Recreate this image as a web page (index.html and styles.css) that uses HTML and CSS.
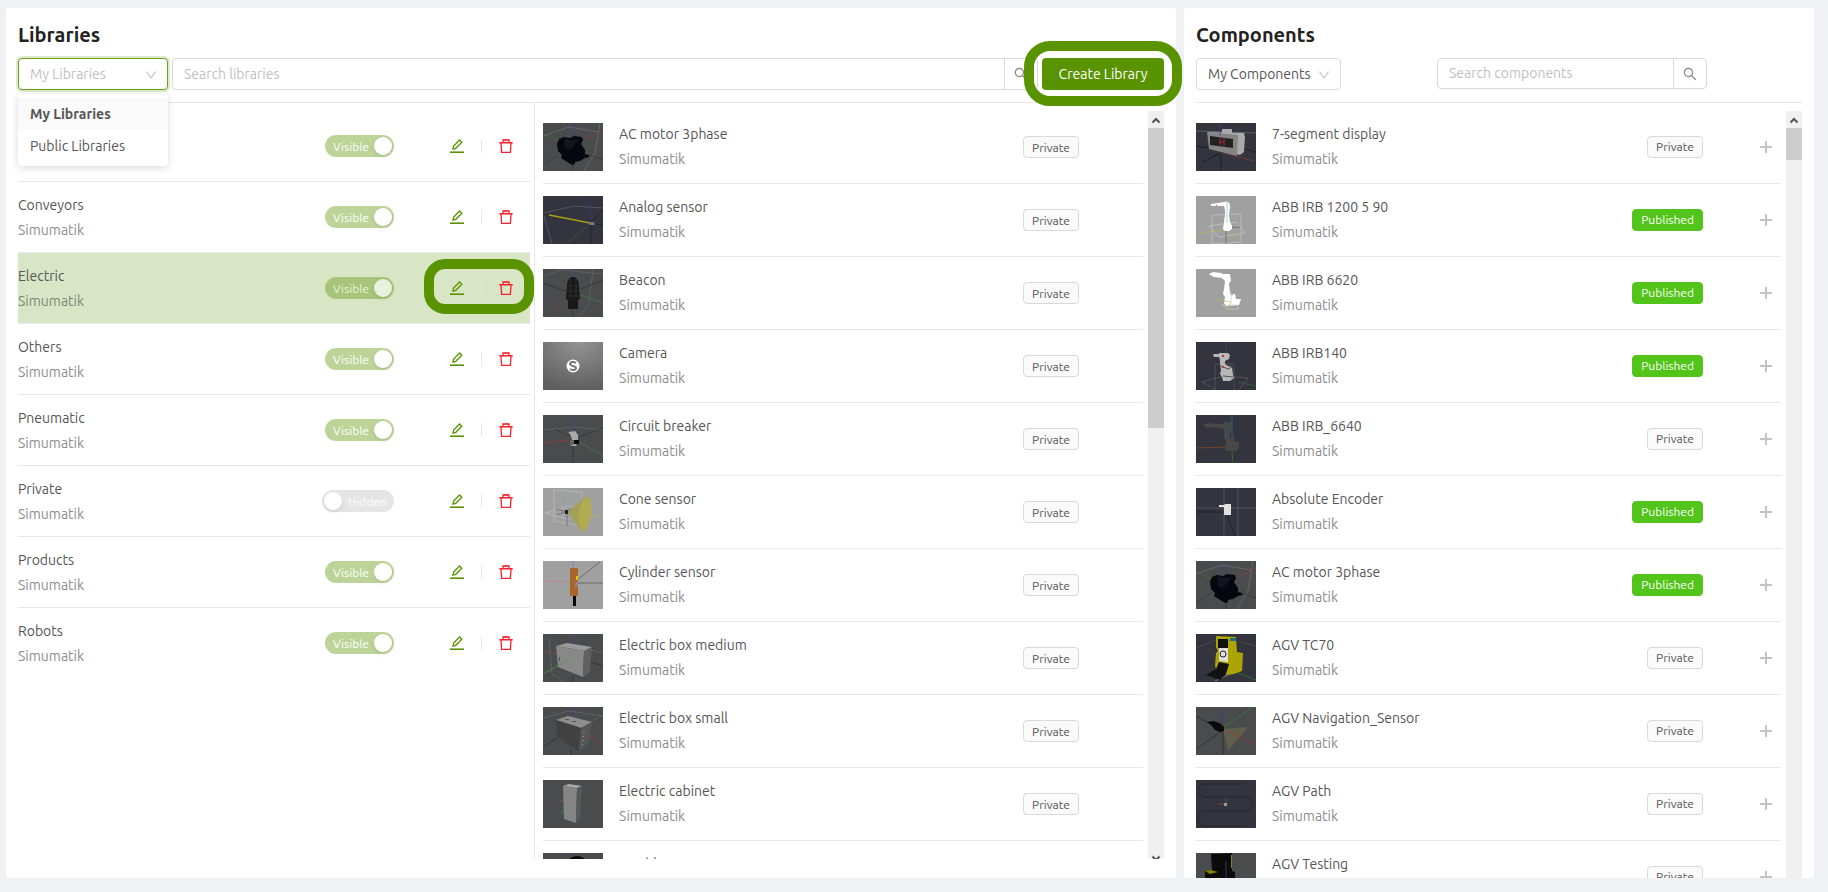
FILE: index.html
```html
<!DOCTYPE html>
<html lang="en">
  <head>
    <meta charset="UTF-8" />
    <meta name="viewport" content="width=device-width, initial-scale=1.0" />
    <title>Libraries</title>
    <link rel="stylesheet" href="styles.css">
  </head>
  <body>
    <svg class="sprite" aria-hidden="true">
      <symbol id="i-search" viewBox="64 64 896 896"><path d="M909.6 854.5L649.9 594.8C690.2 542.7 712 479 712 412c0-80.2-31.3-155.4-87.9-212.1-56.6-56.7-132-87.9-212.1-87.9s-155.5 31.3-212.1 87.9C143.2 256.5 112 331.8 112 412c0 80.1 31.3 155.5 87.9 212.1C256.5 680.8 331.8 712 412 712c67 0 130.6-21.8 182.7-62l259.7 259.6a8.2 8.2 0 0011.6 0l43.6-43.5a8.2 8.2 0 000-11.6zM570.4 570.4C528 612.7 471.8 636 412 636s-116-23.3-158.4-65.6C211.3 528 188 471.8 188 412s23.3-116.1 65.6-158.4C296 211.3 352.2 188 412 188s116.1 23.2 158.4 65.6S636 352.2 636 412s-23.3 116.1-65.6 158.4z"/></symbol>
      <symbol id="i-down" viewBox="64 64 896 896"><path d="M884 256h-75c-5.1 0-9.9 2.5-12.9 6.6L512 654.2 227.9 262.6c-3-4.1-7.8-6.6-12.9-6.6h-75c-6.5 0-10.3 7.4-6.5 12.7l352.6 486.1c12.8 17.6 39 17.6 51.7 0l352.6-486.1c3.9-5.3.1-12.7-6.4-12.7z"/></symbol>
      <symbol id="i-edit" viewBox="0 0 14 14">
        <path fill="none" stroke="currentColor" stroke-width="1.3" d="M3 10l.6-2.900L9.600 1l2.200 2.200-6 6.100z"/>
        <path d="M0 12.400h14V14H0z"/>
      </symbol>
      <symbol id="i-trash" viewBox="0 0 14 14">
        <path fill="#f5222d" fill-opacity=".35" d="M4 0h6v2H4zM0 3h14v2H0z"/>
        <path fill="none" stroke="currentColor" stroke-width="1.300" d="M4 3.500V1h6v2.500M.5 3.600h13M2 4l.6 9.400h8.800L12 4"/>
      </symbol>
      <symbol id="i-plus" viewBox="0 0 14 14"><path fill-opacity=".5" d="M6 1h2v12H6zM1 6h12v2H1z"/></symbol>
      <symbol id="i-arrow" viewBox="0 0 16 16"><path d="M4 10l4-4 4 4-1 2-3-3-3 3z"/></symbol>

      <symbol id="t-motor" viewBox="0 0 60 48">
        <path fill="#4a4b4d" d="M0 0h60v48H0z"/>
        <g fill="none" stroke-width=".7">
          <path stroke="#707173" d="M0 13L26 4l29 5M57 0l-5 30-11 18"/>
          <path stroke="#323335" d="M14 33L0 42M30 38v10M46 32l14 5"/>
          <path stroke="#357a30" d="M0 11l16 7"/><path stroke="#9a4436" d="M60 7L42 16"/><path stroke="#4040a0" d="M30 0v14"/>
        </g>
        <path fill="#06070e" d="M14 21l2-5 5-2 6 1 4-2 8 1 1 3-2 4 4 6v4l4 1v2l-4 1-5 3-5 1v2l-3 1-11-7 1-3-4-4z"/>
        <path fill="#12151f" d="M21 15l7 2 8-1-3 4-6 7-5-2z"/>
      </symbol>
      <symbol id="t-analog" viewBox="0 0 60 48">
        <path fill="#33343d" d="M0 0h60v48H0z"/>
        <g fill="none" stroke-width=".7">
          <path stroke="#64656c" d="M0 17l31-7 29 2M1 20l8 28"/>
          <path stroke="#35358c" d="M47 0v26"/><path stroke="#1d1e24" d="M60 14L48 26v22M50 28l10 1"/>
          <path stroke="#2c672c" d="M47 28L23 48"/><path stroke="#a7a016" stroke-width="1.400" d="M6 19l41 8"/>
        </g>
        <path fill="#777" d="M46 26h5l1 3h-5z"/>
      </symbol>
      <symbol id="t-beacon" viewBox="0 0 60 48">
        <path fill="#4a4b4d" d="M0 0h60v48H0z"/>
        <g fill="none" stroke-width=".7">
          <path stroke="#66676a" d="M0 7l18-6 42 4M50 0l-4 34-10 14"/><path stroke="#303133" d="M0 14l26 9M38 20l22-9M30 40v8"/>
          <path stroke="#3c8838" d="M35 25l25 9"/><path stroke="#813b32" d="M26 28L6 48"/><path stroke="#4646a5" d="M30 0v9"/>
        </g>
        <path fill="#181818" d="M24 17c0-12 12-12 12 0l1 13-2 1v9H25v-9l-2-1z"/>
        <path fill="none" stroke="#3a3a3a" stroke-width=".7" d="M24 17h12M24 22h12M25 27h11M27 10v18M33 10v18"/>
      </symbol>
      <symbol id="t-camera" viewBox="0 0 60 48">
        <radialGradient id="cam" cx=".6" cy="0" r="1"><stop offset="0" stop-color="#949494"/><stop offset="1" stop-color="#5f5f5f"/></radialGradient>
        <path fill="url(#cam)" d="M0 0h60v48H0z"/><circle cx="30" cy="24" r="6.500" fill="#fff"/>
        <path fill="none" stroke="#777" stroke-width="2" d="M33 21c-3-2-6-1-6 1s6 2 6 4-3 3-6 1"/>
      </symbol>
      <symbol id="t-breaker" viewBox="0 0 60 48">
        <path fill="#4a4b4d" d="M0 0h60v48H0z"/>
        <g fill="none" stroke-width=".7">
          <path stroke="#66676a" d="M0 15l32-3 28 3"/><path stroke="#303133" d="M12 14l14 7M30 30v18M36 22l24-9"/>
          <path stroke="#94403a" d="M0 28l27-3"/><path stroke="#3c8838" d="M34 26l26 14"/><path stroke="#4646a5" d="M30 0v16"/>
        </g>
        <path fill="#aaa" d="M25 17l7-1 3 4v6l-2 5h-5l1-7-2-5z"/><path fill="#666" d="M27 25h4v5h-4z"/><path fill="#050505" d="M31 25h5v4h-5z"/>
      </symbol>
      <symbol id="t-cone" viewBox="0 0 60 48">
        <path fill="#a0a0a0" d="M0 0h60v48H0z"/>
        <g fill="none" stroke-width=".7">
          <path stroke="#bbb" d="M11 2l28 2v34l-28-5zM2 25l24-7 18 4-20 9z"/><path stroke="#666" d="M13 21l22 6M24 24v14M14 27l18-7"/>
          <path stroke="#80b4c0" d="M24 0v22"/><path stroke="#c5bb36" d="M42 25l13 3"/>
        </g>
        <path fill="#a3a057" d="M25 24L42 9c8-2 5 34-4 34z"/><ellipse cx="42" cy="26" rx="6" ry="17" fill="#b2ac50" transform="rotate(8 42 26)"/>
        <path fill="#222" d="M22 22h3v4h-3z"/>
      </symbol>
      <symbol id="t-cylinder" viewBox="0 0 60 48">
        <path fill="#a0a0a0" d="M0 0h60v48H0z"/>
        <g fill="none" stroke-width=".7">
          <path stroke="#555" d="M57 1L34 19M34 22h26"/><path stroke="#c78080" d="M0 20l28 1"/><path stroke="#7bb36f" d="M27 26L2 44"/><path stroke="#7777b7" d="M30 0v8"/>
        </g>
        <rect x="27" y="7" width="8" height="28" rx="1" fill="#a86527"/><path fill="#e1c800" d="M33 15h2v4h-2z"/><path fill="#888" d="M32 21h3v5h-3z"/><path fill="#000" d="M30 35h3v10h-3z"/>
      </symbol>
      <symbol id="t-boxm" viewBox="0 0 60 48">
        <path fill="#4a4b4d" d="M0 0h60v48H0z"/>
        <g fill="none" stroke-width=".7">
          <path stroke="#69696c" d="M6 4l3 36 12 8M48 16l12 3"/><path stroke="#29292b" d="M48 28l12 4M30 42v6"/><path stroke="#994736" d="M0 16l14 4"/><path stroke="#4646a5" d="M30 0v11"/>
        </g>
        <path fill="#999" d="M13 12l11-3 25 4-7 4z"/><path fill="#888" d="M13 12l28 5-1 26-25-10z"/><path fill="#606060" d="M41 17l8-4-2 25-7 5z"/>
        <path stroke="#4c9a43" stroke-width=".7" d="M0 40l25-14"/><path fill="#555" d="M16 23h1v4h-1z"/>
      </symbol>
      <symbol id="t-boxs" viewBox="0 0 60 48">
        <path fill="#4a4b4d" d="M0 0h60v48H0z"/>
        <g fill="none" stroke-width=".7">
          <path stroke="#69696c" d="M0 11l26-7 34 5"/><path stroke="#29292b" d="M14 31L0 40M28 42v6"/><path stroke="#3c8838" d="M47 15l13-7"/><path stroke="#4646a5" d="M30 0v10"/>
        </g>
        <path fill="#8e8e8e" d="M13 13l12-4 24 6-11 6z"/><path fill="#414141" d="M13 13l25 8-2 23-22-14z"/><path fill="#565656" d="M38 21l11-6-3 21-10 8z"/>
        <path fill="none" stroke="#aaa" stroke-dasharray="1 3" d="M41 25l-2 16"/><path stroke="#a0393b" stroke-width=".7" d="M44 28l16 8"/><path fill="#555" d="M22 12h4v1h-4zM29 14h4v1h-4z"/>
      </symbol>
      <symbol id="t-cabinet" viewBox="0 0 60 48">
        <path fill="#4a4b4d" d="M0 0h60v48H0z"/>
        <path fill="#aaa" d="M20 6l6-2 13 2-5 2z"/><path fill="#858585" d="M20 6l14 2-1 35-12-4z"/><path fill="#585858" d="M34 8l5-2-2 32-4 5z"/>
        <path stroke="#4c9a43" stroke-width=".7" d="M18 33l9-7"/><path stroke="#a7603c" stroke-width=".7" d="M17 20l4 2"/>
      </symbol>
      <symbol id="t-double" viewBox="0 0 60 48">
        <path fill="#4a4b4d" d="M0 0h60v48H0z"/><circle cx="34" cy="15" r="12" fill="#080808"/><path stroke="#4646a5" stroke-width=".7" d="M30 0v4"/>
      </symbol>
      <symbol id="t-seven" viewBox="0 0 60 48">
        <path fill="#33343d" d="M0 0h60v48H0z"/>
        <g fill="none" stroke-width=".7"><path stroke="#777" d="M0 8l60 2"/><path stroke="#17181c" d="M0 23l12 2M24 30L7 39M25 32v16M48 26l12 3"/><path stroke="#983036" d="M28 30l30 8"/></g>
        <path fill="#aaa" d="M26 6h10v4H26zM12 9l36 1 1 4-1 15-4 3-4-1z"/><path fill="#858585" d="M11 9l31 3-1 21-28-7z"/><path fill="#222" d="M14 13l23 3v9l-23-3z"/>
        <path fill="none" stroke="#c03939" stroke-width=".8" d="M24 15v7M28 15v8M24 19h4"/><path stroke="#4545a0" stroke-width=".7" d="M24 2v11"/>
      </symbol>
      <symbol id="t-irb1200" viewBox="0 0 60 48">
        <path fill="#a0a0a0" d="M0 0h60v48H0z"/>
        <g fill="none" stroke-width=".6"><path stroke="#ccc" d="M16 19l29-1v28l-29 2zM13 30l27-4 9 11-26 4z"/><path stroke="#555" d="M30 32l14-1M30 34v14"/><path stroke="#cbb14b" d="M2 37l28-3"/><path stroke="#95c247" d="M31 34l10 11"/></g>
        <path fill="#fff" d="M15 8l13-2c5-1 6 1 6 5l-1 8 1 7 2 4v3l-3 2h-4l-2-2 1-7 1-7v-5l-1-4-13 0z"/><path stroke="#9ed7e9" d="M31 6v21"/><path fill="#d55" d="M20 9h1v1h-1z"/>
      </symbol>
      <symbol id="t-irb6620" viewBox="0 0 60 48">
        <path fill="#a0a0a0" d="M0 0h60v48H0z"/>
        <path fill="#fff" d="M13 5l4-2 8 1 2 1 7 0 1 7-2 2 1 10 2 3 1-2 2 0 1 5 5 0-2 6-13 1-2-3 1-6-2-3 1-5 1-8-3-3-8-1-4-2z"/>
        <g fill="none" stroke-width=".7"><path stroke="#ccc" d="M26 36l15 0 2 4-12 0z"/><path stroke="#d2b25f" d="M21 31l14 2-4 9"/><path stroke="#9ed7e9" d="M35 22v11"/></g>
      </symbol>
      <symbol id="t-irb140" viewBox="0 0 60 48">
        <path fill="#33343d" d="M0 0h60v48H0z"/>
        <g fill="none" stroke-width=".6"><path stroke="#666" d="M19 22h19v26M19 22v26M6 40l22-6 24 2-9 12M6 40l14 8"/><path stroke="#205c92" d="M30 0v12"/><path stroke="#327b31" d="M42 40l18 4"/></g>
        <path fill="#b8b8b8" d="M17 12h6v-1h9l2 2-1 4-4 2v3l3 2 4 1 1 8 1 3-4 3h-7l-1-4-2-3 1-4-1-7v-3l-1-3h-5z"/>
        <path stroke="#555" fill="none" d="M25 24l7 3 4-2M27 34l10 1"/><path fill="#c33" d="M26 13h2v2h-2zM26 24h2v2h-2z"/>
      </symbol>
      <symbol id="t-irb6640" viewBox="0 0 60 48">
        <path fill="#33343d" d="M0 0h60v48H0z"/>
        <path fill="#484848" d="M7 10l5-2 8 1 7 0 1-2 7 0 1 7-2 3 0 8 3-4 2 1-1 4 5 1v6l-3 3h-10l-1-3 1-6-2-6V14l-8-2-9 1z"/>
        <g fill="none" stroke-width=".8"><path stroke="#864b27" d="M0 33l29-1"/><path stroke="#266da5" d="M36 0v24"/><path stroke="#35762c" d="M36 36l1 12"/></g>
      </symbol>
      <symbol id="t-encoder" viewBox="0 0 60 48">
        <path fill="#33343d" d="M0 0h60v48H0z"/>
        <g fill="none" stroke-width=".7"><path stroke="#606168" d="M28 0v48M42 0v48M0 20h60"/><path stroke="#18191d" d="M0 24h28M31 28l8 20"/></g>
        <path fill="#e2e2e2" d="M23 17l5 0 1-1 6 0v11l-7 0v-8h-5z"/>
      </symbol>
      <symbol id="t-tc70" viewBox="0 0 60 48">
        <path fill="#33343d" d="M0 0h60v48H0z"/>
        <g fill="none" stroke-width=".7"><path stroke="#555" d="M0 14l20-8M45 8l15 4"/><path stroke="#327b31" d="M40 38l20 8"/><path stroke="#9a9aa0" d="M19 47l26-12"/></g>
        <path fill="#aca400" d="M20 2l20 1 1 15 6 1-1 18-8 3-8 1-8-3-3-6 1-13 2-2-2-4z"/><path fill="#111" d="M22 5h10v9H22zM23 28l10 2-3 10-6 6-14-5 10-6z"/><path fill="#ddd" d="M23 14h9v14l-9-1z"/><circle cx="27" cy="20" r="3" fill="none" stroke="#222"/><path fill="#1a7080" d="M34 4h6v3h-6z"/>
      </symbol>
      <symbol id="t-nav" viewBox="0 0 60 48">
        <path fill="#4a4b4d" d="M0 0h60v48H0z"/>
        <path fill="#605f4c" d="M27 22l25-2-20 24z"/>
        <g fill="none" stroke-width=".7"><path stroke="#262628" d="M0 9l13 7M26 24L0 42M27 25v23"/><path stroke="#3434a9" d="M26 0v18"/><path stroke="#378634" d="M28 20L57 0"/><path stroke="#9d3737" d="M29 23l31 15"/></g>
        <path fill="#0a0a0a" d="M11 15l7-1 7 3 3 3 0 4-4 1-5-2-3-4z"/>
      </symbol>
      <symbol id="t-path" viewBox="0 0 60 48">
        <path fill="#33343d" d="M0 0h60v48H0z"/>
        <path fill="none" stroke="#22232a" stroke-width=".8" d="M48 4H9c-9 0-8 13 0 13h41c8 0 8 14 0 14H8c-8 0-8 15 0 15h42"/>
        <path fill="#999" d="M28 23h3v3h-3z"/><path stroke="#7c4331" d="M22 24h6"/><path stroke="#285f75" d="M30 17v6"/>
      </symbol>
      <symbol id="t-testing" viewBox="0 0 60 48">
        <path fill="#4a4b4d" d="M0 0h60v48H0z"/><path fill="#0b0b0b" d="M15 1l21-1v18l3 1v29H9V18l7-1z"/><path fill="#8c8400" d="M9 18l6-1 7 2-8 2zM35 2h1v13h-1z"/><path stroke="#18213d" stroke-width="2" d="M30 8v30"/>
      </symbol>
    </svg>

    <main class="page">
      <section class="panel libraries">
        <h1>Libraries</h1>
        <div class="toolbar">
          <div class="select-wrap library-select">
            <select class="select focused" aria-label="Library source">
              <option>My Libraries</option>
            </select>
            <svg class="chevron"><use href="#i-down"/></svg>
            <ul class="dropdown" role="listbox" aria-label="Library source">
              <li class="active" role="option" aria-selected="true">My Libraries</li>
              <li role="option" aria-selected="false">Public Libraries</li>
            </ul>
          </div>
          <form class="search">
            <input type="text" placeholder="Search libraries" aria-label="Search libraries" />
            <button type="button" aria-label="Search"><svg class="icon"><use href="#i-search"/></svg></button>
          </form>
          <div class="create-wrap">
            <button type="button" class="create">Create Library</button>
            <span class="ring ring-create"></span>
          </div>
        </div>
        <div class="panes">
          <ul class="library-list" id="libraries"></ul>
          <div class="pane">
            <ul class="list" id="content"></ul>
            <div class="scrollbar">
              <svg><use href="#i-arrow"/></svg>
              <div class="thumb thumb-long"></div>
              <svg class="down"><use href="#i-arrow"/></svg>
            </div>
          </div>
        </div>
      </section>

      <section class="panel components">
        <h1>Components</h1>
        <div class="toolbar">
          <div class="select-wrap component-select">
            <select class="select" aria-label="Component source">
              <option>My Components</option>
            </select>
            <svg class="chevron"><use href="#i-down"/></svg>
          </div>
          <form class="search">
            <input type="text" placeholder="Search components" aria-label="Search components" />
            <button type="button" aria-label="Search"><svg class="icon"><use href="#i-search"/></svg></button>
          </form>
        </div>
        <div class="pane">
          <ul class="list" id="components"></ul>
          <div class="scrollbar">
            <svg><use href="#i-arrow"/></svg>
            <div class="thumb"></div>
          </div>
        </div>
      </section>
    </main>
    <script src="script.js"></script>
  </body>
</html>
```
FILE: styles.css
```css
* {
  margin: 0;
  padding: 0;
  box-sizing: border-box;
}
body {
  background: #f0f1f5;
  color: #555;
  font-family: Ubuntu, "Open Sans", sans-serif;
  font-size: 14px;
  line-height: 21px;
}
ul {
  list-style: none;
}
button,
input,
select {
  font: inherit;
  color: inherit;
}
button {
  cursor: pointer;
}
svg {
  display: block;
  fill: currentColor;
}
.sprite {
  position: absolute;
  width: 0;
  height: 0;
}
.icon {
  width: 14px;
  height: 14px;
}
.page {
  display: grid;
  grid-template-columns: 13fr 7fr;
  gap: 8px;
  height: 100vh;
  padding: 8px 14px 14px 6px;
}
.panel {
  display: flex;
  flex-direction: column;
  min-width: 0;
  min-height: 0;
  padding: 12px 12px 0;
  background: #fff;
  border-radius: 2px;
}
.libraries {
  padding-bottom: 19px;
}
h1 {
  margin-bottom: 8px;
  color: #222;
  font-size: 20px;
  font-weight: 600;
  line-height: 30px;
}

/* toolbar */
.toolbar {
  display: flex;
  gap: 4px;
  height: 45px;
  padding-bottom: 12px;
  border-bottom: 1px solid #e8e8e8;
}
.select-wrap {
  position: relative;
  height: 32px;
}
.library-select {
  width: 150px;
}
.component-select {
  width: 145px;
}
.select {
  appearance: none;
  width: 100%;
  height: 32px;
  padding: 0 11px;
  background: #fff;
  border: 1px solid #d9d9d9;
  border-radius: 4px;
  outline: none;
}
.select.focused {
  color: #bfbfbf;
  border-color: #6ba11c;
  box-shadow: 0 0 0 2px rgba(89, 147, 0, 0.2);
}
.chevron {
  position: absolute;
  top: 11px;
  right: 11px;
  width: 12px;
  height: 12px;
  color: #bfbfbf;
  pointer-events: none;
}
.dropdown {
  position: absolute;
  z-index: 3;
  top: 36px;
  left: 0;
  width: 100%;
  padding: 4px 0;
  background: #fff;
  border-radius: 4px;
  box-shadow: 0 2px 8px rgba(0, 0, 0, 0.15);
}
.dropdown li {
  padding: 0 12px;
  line-height: 32px;
}
.dropdown .active {
  background: #fafafa;
  font-weight: 600;
}
.search {
  display: flex;
  flex: 1;
  height: 32px;
  border: 1px solid #d9d9d9;
  border-radius: 4px;
}
.search input {
  flex: 1;
  min-width: 0;
  padding: 0 11px;
  background: none;
  border: 0;
  outline: none;
}
.search input::placeholder {
  color: #bfbfbf;
}
.search button {
  display: grid;
  place-items: center;
  width: 33px;
  background: none;
  border: 0;
  border-left: 1px solid #d9d9d9;
  color: #888;
}
.components .toolbar {
  justify-content: space-between;
  padding-right: 95px;
}
.components .search {
  flex: 0 0 270px;
  height: 31px;
}
.create-wrap {
  position: relative;
  width: 122px;
}
.create {
  width: 100%;
  height: 32px;
  background: #599300;
  border: 0;
  border-radius: 4px;
  color: #fff;
}

/* rounded highlight drawn over the controls */
.ring {
  position: absolute;
  z-index: 2;
  border: 10px solid #599300;
  pointer-events: none;
}
.ring-create {
  inset: -17px -18px -16px;
  border-radius: 26px;
}
.ring-actions {
  inset: -22px -21px -19px -26px;
  border-radius: 21px;
}

/* lists */
.panes {
  display: grid;
  grid-template-columns: 37fr 45fr;
  flex: 1;
  min-height: 0;
}
.library-list {
  padding: 8px 4px 0 0;
  border-right: 1px solid #e8e8e8;
}
.pane {
  display: flex;
  flex: 1;
  gap: 5px;
  min-width: 0;
  min-height: 0;
  margin-top: 8px;
  overflow: hidden;
}
.panes .pane {
  padding-left: 8px;
}
.list {
  flex: 1;
  min-width: 0;
}
.row {
  display: flex;
  align-items: center;
  padding: 12px 0;
  border-bottom: 1px solid #e8e8e8;
}
.library-list .row {
  height: 71px;
}
.library-list .row:last-child {
  border-bottom-color: transparent;
}
.row.selected {
  background: #d9e6c5;
}
.selected .owner {
  color: #7d8674;
}
.thumbnail {
  width: 60px;
  height: 48px;
  margin-right: 16px;
}
.meta {
  flex: 1;
  align-self: flex-start;
  min-width: 0;
  padding-top: 1px;
}
.name {
  margin-bottom: 4px;
}
.owner {
  color: #8c8c8c;
}

/* visible / hidden switch */
.switch {
  position: relative;
  width: 69px;
  height: 22px;
  padding-left: 8px;
  background: #bdd499;
  border-radius: 11px;
  color: #fff;
  font-size: 12px;
  line-height: 24px;
}
.switch input {
  position: absolute;
  opacity: 0;
}
.switch::after {
  content: "";
  position: absolute;
  top: 2px;
  right: 2px;
  width: 18px;
  height: 18px;
  background: #fff;
  border-radius: 50%;
  box-shadow: 0 2px 4px rgba(0, 35, 11, 0.1);
}
.switch.off {
  width: 72px;
  padding-left: 26px;
  background: #e5e5e5;
}
.switch.off::after {
  right: auto;
  left: 2px;
}
.selected .switch {
  background: #a7c579;
  color: #e9f0dd;
}
.selected .switch::after {
  background: #e9f0dd;
}

.actions {
  position: relative;
  display: flex;
  align-items: center;
  gap: 17px;
  margin: 0 17px 0 56px;
}
.actions button,
.add {
  background: none;
  border: 0;
}
.edit {
  color: #599300;
}
.delete {
  color: #f5222d;
}
.separator {
  width: 1px;
  height: 14px;
  background: #e8e8e8;
}
.tag {
  height: 22px;
  padding: 0 8px;
  background: #fafafa;
  border: 1px solid #d9d9d9;
  border-radius: 4px;
  font-size: 12px;
  line-height: 20px;
}
.tag.published {
  background: #52c41a;
  border-color: #52c41a;
  color: #fff;
}
#content .tag {
  margin-right: 64px;
  line-height: 22px;
}
.add {
  margin: 0 8px 0 56px;
  color: #888;
}

/* scrollbar */
.scrollbar {
  flex: 0 0 16px;
  height: 100%;
  background: #f0f0f0;
  color: #555;
}
.scrollbar svg {
  width: 16px;
  height: 17px;
}
.thumb {
  height: 32px;
  background: #cdcdcd;
}
.thumb-long {
  height: 300px;
}
.scrollbar .down {
  margin-top: 423px;
  transform: rotate(180deg);
}
```
FILE: script.js
```js
const libraries = [
  { name: "", owner: "", visible: true },
  { name: "Conveyors", owner: "Simumatik", visible: true },
  { name: "Electric", owner: "Simumatik", visible: true, selected: true },
  { name: "Others", owner: "Simumatik", visible: true },
  { name: "Pneumatic", owner: "Simumatik", visible: true },
  { name: "Private", owner: "Simumatik", visible: false },
  { name: "Products", owner: "Simumatik", visible: true },
  { name: "Robots", owner: "Simumatik", visible: true },
];

// name, thumbnail
const content = [
  ["AC motor 3phase", "motor"],
  ["Analog sensor", "analog"],
  ["Beacon", "beacon"],
  ["Camera", "camera"],
  ["Circuit breaker", "breaker"],
  ["Cone sensor", "cone"],
  ["Cylinder sensor", "cylinder"],
  ["Electric box medium", "boxm"],
  ["Electric box small", "boxs"],
  ["Electric cabinet", "cabinet"],
  ["Double", "double"],
];

// name, thumbnail, published
const components = [
  ["7-segment display", "seven", false],
  ["ABB IRB 1200 5 90", "irb1200", true],
  ["ABB IRB 6620", "irb6620", true],
  ["ABB IRB140", "irb140", true],
  ["ABB IRB_6640", "irb6640", false],
  ["Absolute Encoder", "encoder", true],
  ["AC motor 3phase", "motor", true],
  ["AGV TC70", "tc70", false],
  ["AGV Navigation_Sensor", "nav", false],
  ["AGV Path", "path", false],
  ["AGV Testing", "testing", false],
];

const icon = (id) => `<svg class="icon"><use href="#i-${id}"/></svg>`;

const meta = (name, owner) => `
  <div class="meta">
    <div class="name">${name}</div>
    <div class="owner">${owner}</div>
  </div>`;

const componentRow = ([name, thumb, published], canAdd) => `
  <li class="row">
    <svg class="thumbnail"><use href="#t-${thumb}"/></svg>
    ${meta(name, "Simumatik")}
    <span class="tag ${published ? "published" : ""}">${published ? "Published" : "Private"}</span>
    ${canAdd ? `<button type="button" class="add" aria-label="Add ${name}">${icon("plus")}</button>` : ""}
  </li>`;

document.getElementById("libraries").innerHTML = libraries
  .map(
    (lib) => `
  <li class="row ${lib.selected ? "selected" : ""}">
    ${meta(lib.name, lib.owner)}
    <label class="switch ${lib.visible ? "" : "off"}">
      <input type="checkbox" role="switch" ${lib.visible ? "checked" : ""} />
      <span>${lib.visible ? "Visible" : "Hidden"}</span>
    </label>
    <div class="actions">
      <button type="button" class="edit" aria-label="Edit">${icon("edit")}</button>
      <span class="separator"></span>
      <button type="button" class="delete" aria-label="Delete">${icon("trash")}</button>
      ${lib.selected ? '<span class="ring ring-actions"></span>' : ""}
    </div>
  </li>`
  )
  .join("");

document.getElementById("content").innerHTML = content
  .map((item) => componentRow(item, false))
  .join("");

document.getElementById("components").innerHTML = components
  .map((item) => componentRow(item, true))
  .join("");
```
